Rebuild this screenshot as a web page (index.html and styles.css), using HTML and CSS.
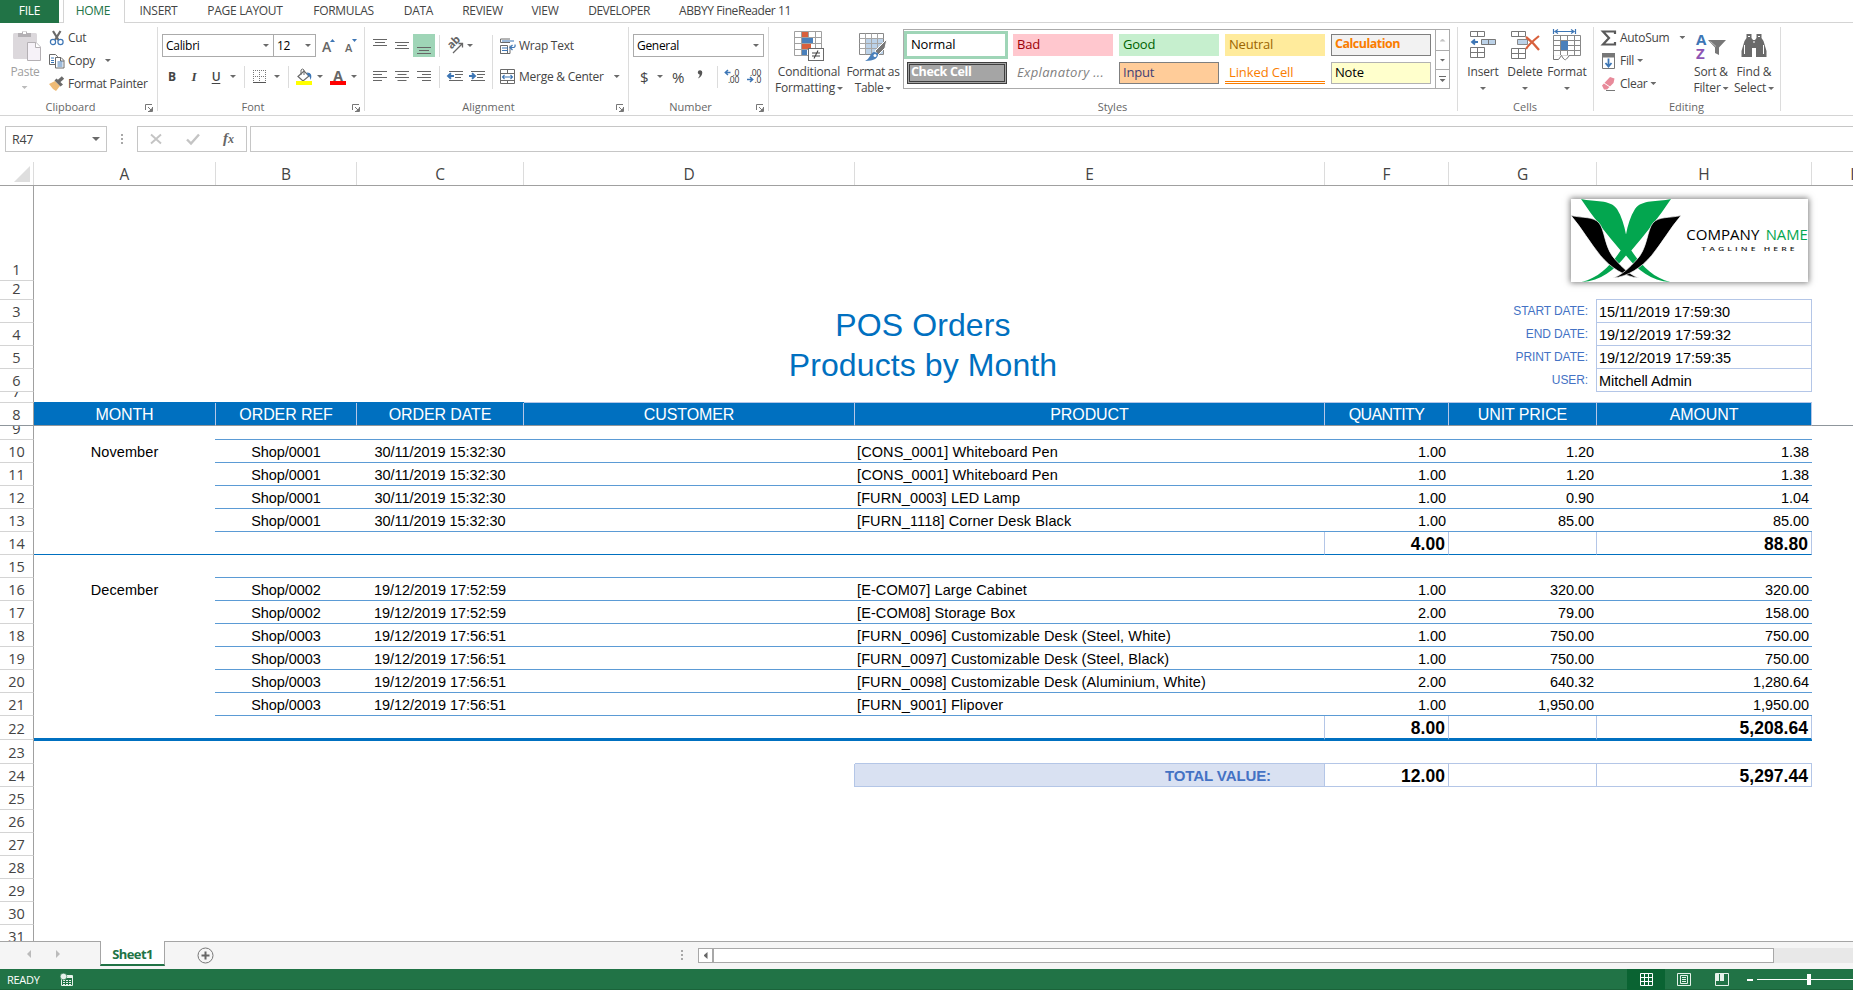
FILE: index.html
```html
<!DOCTYPE html>
<html lang="en">
<head>
<meta charset="utf-8">
<title>POS Orders</title>
<link rel="stylesheet" href="styles.css">
</head>
<body>
<div class="app">

<nav class="tabs">
  <div class="tab file">FILE</div>
  <div class="tab home">HOME</div>
  <div class="tab t-insert">INSERT</div>
  <div class="tab t-layout">PAGE LAYOUT</div>
  <div class="tab t-formulas">FORMULAS</div>
  <div class="tab t-data">DATA</div>
  <div class="tab t-review">REVIEW</div>
  <div class="tab t-view">VIEW</div>
  <div class="tab t-dev">DEVELOPER</div>
  <div class="tab t-abbyy">ABBYY FineReader 11</div>
</nav>

<section class="ribbon">
  <div class="group g-clip">
    <div class="body clip-body">
      <div class="paste">
        <svg width="30" height="32" viewBox="0 0 30 32"><rect x="1" y="3" width="24" height="26" rx="1.5" fill="#dcd8dc"/><path d="M6 3h4V1.500h5V3h4v4H6z" fill="#b4b0b4"/><rect x="11" y="2" width="3" height="2" fill="#fff"/><path d="M15.500 12.500h8.500l4.500 4.500v13.500h-13z" fill="#f6f2f8" stroke="#b4b0b4"/><path d="M23.500 12.500v5h5" fill="#fff" stroke="#b4b0b4"/></svg>
        <span>Paste</span><b class="dd pale"></b>
      </div>
      <div class="clip-list">
        <div class="line"><svg width="16" height="16" viewBox="0 0 16 16"><path d="M4 1l5.500 9M11.500 1L6 10" stroke="#6a6a6a" stroke-width="2.200"/><circle cx="4" cy="12" r="2.600" fill="none" stroke="#3d76b5" stroke-width="1.200"/><circle cx="11.500" cy="12" r="2.600" fill="none" stroke="#3d76b5" stroke-width="1.200"/></svg><span>Cut</span></div>
        <div class="line"><svg width="16" height="16" viewBox="0 0 16 16"><path d="M.5 1.500h6l2 2v8h-8z" fill="#fff" stroke="#6a6a6a"/><path d="M2 5h3M2 7.500h3M2 9.500h3" stroke="#3d76b5"/><path d="M6.500 4.500h5.500l3 3v7.500H6.500z" fill="#fff" stroke="#6a6a6a"/><path d="M11.500 4.500v3.500h3.500" fill="none" stroke="#6a6a6a"/><path d="M8.500 9h5M8.500 11h5M8.500 13h5" stroke="#3d76b5"/></svg><span>Copy</span><b class="dd copy-dd"></b></div>
        <div class="line"><svg width="16" height="16" viewBox="0 0 16 16"><path d="M0 8l6-3 5 5-4 5-3-2z" fill="#eebb77"/><path d="M5.500 4.500l2-2 6.500 6-2.500 2z" fill="#6a6a6a"/><path d="M9.500 5.500L14 1.500" stroke="#6a6a6a" stroke-width="3.500"/></svg><span>Format Painter</span></div>
      </div>
    </div>
    <div class="label">Clipboard<svg class="launch" width="8" height="8" viewBox="0 0 8 8"><path d="M.5 6V.5H7" fill="none" stroke="#777"/><path d="M3 3l3 3M7.500 3v4.500H3" stroke="#777" fill="none"/><path d="M7 4v3H4z" fill="#777"/></svg></div>
  </div>

  <div class="group g-font">
    <div class="body rows">
      <div class="bar top">
        <div class="combo c-name">Calibri<b class="dd"></b></div><div class="combo c-size">12<b class="dd"></b></div>
        <svg class="grow" width="14" height="16" viewBox="0 0 14 16"><text x="0" y="14" class="ga">A</text><path d="M8 4l2.500-3L13 4z" fill="#3d76b5"/></svg>
        <svg class="shrink" width="14" height="16" viewBox="0 0 14 16"><text x="1" y="14" class="gb">A</text><path d="M8 1h5l-2.500 3z" fill="#3d76b5"/></svg>
      </div>
      <div class="bar low">
        <span class="btn bold">B</span><span class="btn ital">I</span><span class="btn und">U</span><b class="dd f1"></b><i class="vs f2"></i>
        <svg class="f3" width="13" height="13" viewBox="0 0 13 13"><path d="M.5 0v12M6.500 0v12M12.500 0v12M0 .5h13M0 6.500h13" stroke="#777" stroke-dasharray="1 1"/><path d="M0 12.500h13" stroke="#555"/></svg><b class="dd f4"></b><i class="vs f5"></i>
        <svg class="f6" width="16" height="17" viewBox="0 0 16 17"><path d="M2 8.500l6-5.500 5 5-6 5z" fill="#fff" stroke="#6a6a6a" stroke-width="1.200"/><path d="M5 7V2q1.500-2 3 0v5" fill="none" stroke="#6a6a6a"/><path d="M11 4.500c4 0 5.500 3 3.500 7.500-.5-3-1-4-3-5z" fill="#3d76b5"/><path d="M0 13h16v4H0z" fill="#ff0"/></svg><b class="dd f7"></b>
        <svg class="f8" width="16" height="17" viewBox="0 0 16 17"><text x="8" y="12.500" text-anchor="middle" class="fa">A</text><path d="M0 13h16v4H0z" fill="#f00"/></svg><b class="dd f9"></b>
      </div>
    </div>
    <div class="label">Font<svg class="launch" width="8" height="8" viewBox="0 0 8 8"><path d="M.5 6V.5H7" fill="none" stroke="#777"/><path d="M3 3l3 3M7.500 3v4.500H3" stroke="#777" fill="none"/><path d="M7 4v3H4z" fill="#777"/></svg></div>
  </div>

  <div class="group g-align">
    <div class="body rows">
      <div class="bar top">
        <span class="btn first"><svg width="14" height="14" viewBox="0 0 14 14"><path d="M0 .5h14M2 3.500h10M0 6.500h14" stroke="#666"/></svg></span>
        <span class="btn"><svg width="14" height="14" viewBox="0 0 14 14"><path d="M0 3.500h14M2 6.500h10M0 9.500h14" stroke="#666"/></svg></span>
        <span class="btn on"><svg width="14" height="14" viewBox="0 0 14 14"><path d="M0 8.500h14M2 11.500h10M0 14.500h14" stroke="#666"/></svg></span>
        <i class="vs a1"></i>
        <svg class="a2" width="18" height="16" viewBox="0 0 18 16"><text transform="translate(4.500 11.500) rotate(-45)" class="abt">ab</text><path d="M6 15L15 6M11.500 5.500h4v4" fill="none" stroke="#666" stroke-width="1.300"/></svg><b class="dd a3"></b><i class="vs a4"></i>
        <svg class="a5" width="16" height="16" viewBox="0 0 16 16"><path d="M.5 1h9.500M.5 1v3.500h9.500M.5 7.500h7v8h-7zM10 7.500v8H.5" fill="none" stroke="#6a6a6a"/><path d="M2 3h12M2 10h6M2 12.500h6M10.500 9.500h3q2 0 1.500-3M12.500 7l-2.500 2.500 2.500 2.500" fill="none" stroke="#3d76b5" stroke-width="1.200"/></svg><span class="txt">Wrap Text</span>
      </div>
      <div class="bar low">
        <span class="btn first"><svg width="14" height="12" viewBox="0 0 14 12"><path d="M0 .5h14M0 3.500h9M0 6.500h14M0 9.500h9" stroke="#666"/></svg></span>
        <span class="btn"><svg width="14" height="12" viewBox="0 0 14 12"><path d="M0 .5h14M2.500 3.500h9M0 6.500h14M2.500 9.500h9" stroke="#666"/></svg></span>
        <span class="btn"><svg width="14" height="12" viewBox="0 0 14 12"><path d="M0 .5h14M5 3.500h9M0 6.500h14M5 9.500h9" stroke="#666"/></svg></span>
        <i class="vs a1"></i>
        <svg class="a6" width="16" height="12" viewBox="0 0 16 12"><path d="M2 .5h14M8 3.500h8M8 6.500h6M2 9.500h14" stroke="#666"/><path d="M7 5H1.500M4 2.200L1 5l3 2.800" fill="none" stroke="#3d76b5" stroke-width="1.900"/></svg>
        <svg class="a7" width="16" height="12" viewBox="0 0 16 12"><path d="M2 .5h14M8 3.500h8M8 6.500h6M2 9.500h14" stroke="#666"/><path d="M0 5h5.500M3 2.200L6 5 3 7.800" fill="none" stroke="#3d76b5" stroke-width="1.900"/></svg>
        <i class="vs a8"></i>
        <svg class="a9" width="16" height="16" viewBox="0 0 16 16"><path d="M.5.500h14v14H.5zM.5 4.500h14M.5 11.500h14M7.500.500v4M7.500 11.500v3" fill="none" stroke="#6a6a6a"/><path d="M2 8h11M4.500 6L2.500 8l2 2M10.500 6l2 2-2 2" fill="none" stroke="#3d76b5" stroke-width="1.100"/></svg><span class="txt">Merge &amp; Center</span><b class="dd a10"></b>
      </div>
    </div>
    <div class="label">Alignment<svg class="launch" width="8" height="8" viewBox="0 0 8 8"><path d="M.5 6V.5H7" fill="none" stroke="#777"/><path d="M3 3l3 3M7.500 3v4.500H3" stroke="#777" fill="none"/><path d="M7 4v3H4z" fill="#777"/></svg></div>
  </div>

  <div class="group g-num">
    <div class="body rows">
      <div class="bar top"><div class="combo c-gen">General<b class="dd"></b></div></div>
      <div class="bar low">
        <span class="dollar">$</span><b class="dd n1"></b><span class="pct">%</span><svg class="comma" width="6" height="9" viewBox="0 0 6 9"><path d="M.8 2.300a2.200 2.200 0 1 1 4.500.4C5 5.500 3.500 7 1 8.500c1-1.500 1.700-2.500 1.700-3.900C1.500 4.500.8 3.500.8 2.300z" fill="#555"/></svg><i class="vs n2"></i>
        <svg class="n3" width="16" height="15" viewBox="0 0 16 15"><text x="15" y="6.500" text-anchor="end" class="dec">.0</text><text x="15" y="14" text-anchor="end" class="dec">.00</text><path d="M6.500 3.500H1.500M4 1L1.300 3.500 4 6" fill="none" stroke="#3d76b5" stroke-width="1.500"/></svg>
        <svg class="n4" width="16" height="15" viewBox="0 0 16 15"><text x="15" y="6.500" text-anchor="end" class="dec">.00</text><text x="15" y="14" text-anchor="end" class="dec">.0</text><path d="M1 10.500h5M4 8l2.700 2.500L4 13" fill="none" stroke="#3d76b5" stroke-width="1.500"/></svg>
      </div>
    </div>
    <div class="label">Number<svg class="launch" width="8" height="8" viewBox="0 0 8 8"><path d="M.5 6V.5H7" fill="none" stroke="#777"/><path d="M3 3l3 3M7.500 3v4.500H3" stroke="#777" fill="none"/><path d="M7 4v3H4z" fill="#777"/></svg></div>
  </div>

  <div class="group g-styles">
    <div class="body">
      <div class="big b-cond">
        <svg width="30" height="30" viewBox="0 0 30 30"><path d="M.5.500h27v24H.5zM.5 6.500h27M.5 12.500h27M.5 18.500h27M7.500.500v24M14.500.500v24M21.500.500v24" fill="#fff" stroke="#a0a0a0"/><path d="M8 1h6v5H8zM8 13h9v5H8z" fill="#d8603c"/><path d="M8 7h11v5H8zM8 19h5v5H8z" fill="#4a80bb"/><rect x="14.500" y="17.500" width="15" height="12" fill="#fff" stroke="#6a6a6a"/><path d="M18 22h8M18 25h8M24 19.500l-4 8" stroke="#444" stroke-width="1.100"/></svg>
        <span>Conditional</span><span>Formatting <b class="dd"></b></span>
      </div>
      <div class="big b-table">
        <svg width="30" height="30" viewBox="0 0 30 30"><path d="M1.500 2.500h24v21h-24z" fill="#fff" stroke="#888"/><path d="M8 8h17v15H8z" fill="#bcd2e8"/><path d="M1.500 7.500h24M1.500 12.500h24M1.500 17.500h24M7.500 2.500v21M13.500 2.500v21M19.500 2.500v21" stroke="#a6a6a6"/><path d="M29 8l-2 9-7 7-3-4z" fill="#777" stroke="#fff"/><path d="M20 22c1 5-4 8-13 8 5-2 5-8 9-9z" fill="#4a80bb"/><circle cx="17" cy="24.500" r="1.500" fill="#fff"/></svg>
        <span>Format as</span><span>Table <b class="dd"></b></span>
      </div>
      <div class="gallery">
        <div class="chips">
          <div class="chip s-normal">Normal</div><div class="chip s-bad">Bad</div><div class="chip s-good">Good</div><div class="chip s-neutral">Neutral</div><div class="chip s-calc">Calculation</div>
          <div class="chip s-check">Check Cell</div><div class="chip s-exp">Explanatory ...</div><div class="chip s-input">Input</div><div class="chip s-link">Linked Cell</div><div class="chip s-note">Note</div>
        </div>
        <div class="scroller"><div class="sc"><b class="up"></b></div><div class="sc mid"><b class="dd"></b></div><div class="sc end"><u></u><b class="dd"></b></div></div>
      </div>
    </div>
    <div class="label">Styles</div>
  </div>

  <div class="group g-cells">
    <div class="body">
      <div class="big b-ins">
        <svg width="28" height="30" viewBox="0 0 28 30"><path d="M1.500 1.500h14v5h-14zM8.500 1.500v5M1.500 17.500h14v10h-14zM8.500 17.500v10M1.500 22.500h14" fill="#fff" stroke="#777"/><path d="M12.500 9.500h14v5h-14zM19.500 9.500v5" fill="#bcd2e8" stroke="#777"/><path d="M9 12H3.500M6 9.500L3 12l3 2.500" fill="none" stroke="#3d76b5" stroke-width="1.800"/></svg>
        <span>Insert</span><b class="dd"></b>
      </div>
      <div class="big b-del">
        <svg width="30" height="30" viewBox="0 0 30 30"><path d="M1.500 1.500h14v5h-14zM8.500 1.500v5M1.500 18.500h14v10h-14zM8.500 18.500v10M1.500 23.500h14" fill="#fff" stroke="#777"/><path d="M7.500 9.500h10v5h-10z" fill="#bcd2e8" stroke="#888"/><path d="M16 7c4 3 9 8 13 13M29 6c-5 4-10 8-13 13" fill="none" stroke="#d8603c" stroke-width="2.200"/></svg>
        <span>Delete</span><b class="dd"></b>
      </div>
      <div class="big b-fmt">
        <svg width="30" height="32" viewBox="0 0 30 32"><path d="M1.500 0v5M23.500 0v5M3 2.500h19M6 .5l-3 2 3 2M19 .5l3 2-3 2" fill="none" stroke="#3d76b5" stroke-width="1.200"/><path d="M1.500 6.500h27v20h-27zM1.500 11.500h27M1.500 21.500h27M8.500 6.500v20M15.500 6.500v20M22.500 6.500v20M1.500 16.500h27" fill="#fff" stroke="#888"/><path d="M9 12h7v9H9z" fill="#4a80bb"/><path d="M1.500 26v4.500h5l3-4q3 6 5 3.500l3-3.500" fill="#fff" stroke="#777"/></svg>
        <span>Format</span><b class="dd"></b>
      </div>
    </div>
    <div class="label">Cells</div>
  </div>

  <div class="group g-edit">
    <div class="body">
      <div class="edit-list">
        <div class="line"><svg width="16" height="16" viewBox="0 0 16 16"><path d="M14 4V1.500H2L8 8l-6 6.500h12V12" fill="none" stroke="#5a5a5a" stroke-width="2.200"/></svg><span>AutoSum</span><b class="dd as-dd"></b></div>
        <div class="line"><svg width="16" height="16" viewBox="0 0 16 16"><path d="M1.500.500h12v15h-12z" fill="#fff" stroke="#777"/><path d="M1 0h13v4.500H1z" fill="#777"/><path d="M7.500 5.500v8M4.500 10l3 3.500 3-3.500" fill="none" stroke="#3d76b5" stroke-width="1.800"/></svg><span>Fill</span><b class="dd"></b></div>
        <div class="line"><svg width="16" height="16" viewBox="0 0 16 16"><path d="M1 9.500L9 1l4.500 1.500L12.500 7 6 13.500H3z" fill="#e88a9a"/><path d="M3 7l6 4" stroke="#fff"/><path d="M5 14.500h9" stroke="#777"/></svg><span>Clear</span><b class="dd"></b></div>
      </div>
      <div class="big b-sort">
        <svg width="30" height="28" viewBox="0 0 30 28"><text x="0" y="12.500" class="az" fill="#3d76b5">A</text><text x="0" y="27" class="az" fill="#8e55b4">Z</text><path d="M12 8h18l-7 7.500V23l-4-2v-5.500z" fill="#777"/><path d="M14.500 9.500l5.500 5" stroke="#bbb"/></svg>
        <span>Sort &amp;</span><span>Filter <b class="dd"></b></span>
      </div>
      <div class="big b-find">
        <svg width="28" height="26" viewBox="0 0 28 26"><path d="M6.500 1h5v4l1.500 2h2L16.500 5V1h5v4l2 3 3 10v6H16v-9h-4v9H1.500v-6l3-10 2-3z" fill="#6a6a6a"/><path d="M4.500 12v9M23.500 12v9M8 3.500h2M18 3.500h2M13 9h2" stroke="#fff"/></svg>
        <span>Find &amp;</span><span>Select <b class="dd"></b></span>
      </div>
    </div>
    <div class="label">Editing</div>
  </div>
</section>

<section class="fbar">
  <div class="namebox">R47<b class="dd big-dd"></b></div>
  <div class="dots"><i></i><i></i><i></i></div>
  <div class="fx">
    <svg width="12" height="12" viewBox="0 0 12 12"><path d="M1 1.500l10 9M11 1.500l-10 9" stroke="#c4c4c4" stroke-width="1.900"/></svg>
    <svg width="14" height="12" viewBox="0 0 14 12"><path d="M1 6.500l4 4L13 1.500" fill="none" stroke="#c4c4c4" stroke-width="2.400"/></svg>
    <span class="fxt">f<small>x</small></span>
  </div>
  <div class="finput"></div>
</section>

<main class="sheet">
  <div class="row cols">
    <div class="corner"><svg width="16" height="16" viewBox="0 0 16 16"><path d="M16 0v16H0z" fill="#dedede"/></svg></div>
    <div>A</div><div>B</div><div>C</div><div>D</div><div>E</div><div>F</div><div>G</div><div>H</div><div>I</div>
  </div>
  <div class="row r1"><div class="rh">1</div></div>
  <div class="row r2"><div class="rh">2</div></div>
  <div class="headrows">
    <div class="nums"><div class="rh">3</div><div class="rh">4</div><div class="rh">5</div><div class="rh">6</div></div>
    <div class="title"><div>POS Orders</div><div>Products by Month</div></div>
    <div class="labs"><div>START DATE:</div><div>END DATE:</div><div>PRINT DATE:</div><div>USER:</div></div>
    <div class="vals"><div>15/11/2019 17:59:30</div><div>19/12/2019 17:59:32</div><div>19/12/2019 17:59:35</div><div>Mitchell Admin</div></div>
  </div>
  <div class="row r7"><div class="rh">7</div><i></i><i></i><i></i><i></i><i></i><i></i><i></i><i></i></div>
  <div class="row th"><div class="rh">8</div><div>MONTH</div><div>ORDER REF</div><div>ORDER DATE</div><div>CUSTOMER</div><div>PRODUCT</div><div class="tight">QUANTITY</div><div>UNIT PRICE</div><div>AMOUNT</div><div class="rest"></div></div>
  <div class="row r9 lined"><div class="rh">9</div><i></i><i></i><i></i><i></i><i></i><i></i><i></i><i></i></div>
  <div class="row lined"><div class="rh">10</div><div>November</div><div>Shop/0001</div><div>30/11/2019 15:32:30</div><div></div><div>[CONS_0001] Whiteboard Pen</div><div>1.00</div><div>1.20</div><div>1.38</div></div>
  <div class="row lined"><div class="rh">11</div><div></div><div>Shop/0001</div><div>30/11/2019 15:32:30</div><div></div><div>[CONS_0001] Whiteboard Pen</div><div>1.00</div><div>1.20</div><div>1.38</div></div>
  <div class="row lined"><div class="rh">12</div><div></div><div>Shop/0001</div><div>30/11/2019 15:32:30</div><div></div><div>[FURN_0003] LED Lamp</div><div>1.00</div><div>0.90</div><div>1.04</div></div>
  <div class="row lined"><div class="rh">13</div><div></div><div>Shop/0001</div><div>30/11/2019 15:32:30</div><div></div><div>[FURN_1118] Corner Desk Black</div><div>1.00</div><div>85.00</div><div>85.00</div></div>
  <div class="row sum"><div class="rh">14</div><div></div><div></div><div></div><div></div><div></div><div>4.00</div><div></div><div>88.80</div></div>
  <div class="row lined"><div class="rh">15</div><i></i><i></i><i></i><i></i><i></i><i></i><i></i><i></i></div>
  <div class="row lined"><div class="rh">16</div><div>December</div><div>Shop/0002</div><div>19/12/2019 17:52:59</div><div></div><div>[E-COM07] Large Cabinet</div><div>1.00</div><div>320.00</div><div>320.00</div></div>
  <div class="row lined"><div class="rh">17</div><div></div><div>Shop/0002</div><div>19/12/2019 17:52:59</div><div></div><div>[E-COM08] Storage Box</div><div>2.00</div><div>79.00</div><div>158.00</div></div>
  <div class="row lined"><div class="rh">18</div><div></div><div>Shop/0003</div><div>19/12/2019 17:56:51</div><div></div><div>[FURN_0096] Customizable Desk (Steel, White)</div><div>1.00</div><div>750.00</div><div>750.00</div></div>
  <div class="row lined"><div class="rh">19</div><div></div><div>Shop/0003</div><div>19/12/2019 17:56:51</div><div></div><div>[FURN_0097] Customizable Desk (Steel, Black)</div><div>1.00</div><div>750.00</div><div>750.00</div></div>
  <div class="row lined"><div class="rh">20</div><div></div><div>Shop/0003</div><div>19/12/2019 17:56:51</div><div></div><div>[FURN_0098] Customizable Desk (Aluminium, White)</div><div>2.00</div><div>640.32</div><div>1,280.64</div></div>
  <div class="row lined"><div class="rh">21</div><div></div><div>Shop/0003</div><div>19/12/2019 17:56:51</div><div></div><div>[FURN_9001] Flipover</div><div>1.00</div><div>1,950.00</div><div>1,950.00</div></div>
  <div class="row sum tall thick"><div class="rh">22</div><div></div><div></div><div></div><div></div><div></div><div>8.00</div><div></div><div>5,208.64</div></div>
  <div class="row tall r23"><div class="rh">23</div><i></i><i></i><i></i><i></i><i></i><i></i><i></i><i></i></div>
  <div class="row total"><div class="rh">24</div><div></div><div></div><div></div><div></div><div>TOTAL VALUE:</div><div>12.00</div><div></div><div>5,297.44</div></div>
  <div class="row"><div class="rh">25</div></div>
  <div class="row"><div class="rh">26</div></div>
  <div class="row"><div class="rh">27</div></div>
  <div class="row"><div class="rh">28</div></div>
  <div class="row"><div class="rh">29</div></div>
  <div class="row"><div class="rh">30</div></div>
  <div class="row"><div class="rh">31</div></div>

  <svg class="logo" width="237" height="83" viewBox="0 0 711 250" preserveAspectRatio="none">
    <path fill="#03a64f" d="M30 0C72 10 116 0 138 30C152 52 160 80 165 107C170 80 178 52 192 30C214 0 258 10 300 0C264 56 222 106 181 155C212 202 246 236 298 250C240 246 200 214 165 170C130 214 90 246 32 250C84 236 118 202 149 155C108 106 66 56 30 0Z"/>
    <path stroke="#fff" stroke-width="2" d="M0 50C38 58 66 52 84 72C102 92 100 150 134 184C154 206 176 228 203 238C160 234 118 206 88 170C54 128 34 90 0 50Z"/>
    <path stroke="#fff" stroke-width="2" d="M330 50C292 58 264 52 246 72C228 92 230 150 196 184C176 206 154 228 127 238C170 234 212 206 242 170C276 128 296 90 330 50Z"/>
    <text x="346" y="125" class="co" textLength="219" lengthAdjust="spacingAndGlyphs">COMPANY</text>
    <text x="584" y="125" class="co gr" textLength="126" lengthAdjust="spacingAndGlyphs">NAME</text>
    <text transform="translate(391 157) scale(2 1)" class="tag" textLength="143">TAGLINE HERE</text>
  </svg>
</main>

<footer class="sheetbar">
  <b class="tri-l"></b><b class="tri-r"></b>
  <div class="stab">Sheet1</div>
  <svg class="plus" width="17" height="17" viewBox="0 0 17 17"><circle cx="8.500" cy="8.500" r="7.500" fill="none" stroke="#777"/><path d="M8.500 4.500v8M4.500 8.500h8" stroke="#666" stroke-width="2"/></svg>
  <div class="dots sdots"><i></i><i></i><i></i></div>
  <div class="hscroll"><div class="hbtn"><b></b></div><div class="thumb"></div></div>
</footer>
<div class="status">
  <span>READY</span>
  <svg class="macro" width="14" height="14" viewBox="0 0 14 14"><path d="M1.500 2.500h11v10h-11z" fill="#217346" stroke="#e6f2ea"/><path d="M2 3h11v2H2z" fill="#e6f2ea"/><path d="M3 7.500h2M6 7.500h2M9 7.500h2M3 9.500h2M6 9.500h2M9 9.500h2M3 11.500h2M6 11.500h2M9 11.500h2" stroke="#e6f2ea"/><circle cx="3.500" cy="3.500" r="3.300" fill="#e6f2ea" stroke="#217346" stroke-width=".6"/></svg>
  <div class="view on"><svg width="13" height="13" viewBox="0 0 13 13"><path d="M.5.500h12v12H.5zM4.500 0v13M8.500 0v13M0 4.500h13M0 8.500h13" fill="none" stroke="#fff"/></svg></div>
  <div class="view"><svg width="14" height="13" viewBox="0 0 14 13"><path d="M.5.500h13v12H.5zM3.500 2.500h7v8h-7zM5 4.500h4M5 6.500h4M5 8.500h4" fill="none" stroke="#e6f2ea"/></svg></div>
  <div class="view"><svg width="14" height="13" viewBox="0 0 14 13"><path d="M.5.500h13v12H.5z" fill="none" stroke="#e6f2ea"/><path d="M1 1h3v7H1zM5 1h4v7H5z" fill="#e6f2ea"/></svg></div>
  <div class="minus"></div>
  <div class="slider"><i></i></div>
</div>

</div>
</body>
</html>
```
FILE: styles.css
```css
* { box-sizing: border-box; }
body { margin: 0; background: #fff; font-family: "Open Sans", "Noto Sans", sans-serif; font-size: 12px; color: #444; letter-spacing: -0.3px; }
i { font-style: normal; }
svg { display: block; flex: none; overflow: visible; }
.app { width: 1853px; height: 990px; overflow: hidden; display: flex; flex-direction: column; }

/* drop-down arrow */
.dd { display: inline-block; flex: none; width: 6px; height: 3px; background: #6a6a6a; clip-path: polygon(0 0, 100% 0, 50% 100%); }
.dd.pale { background: #bbb; }

/* tabs */
.tabs { display: flex; height: 23px; flex: none; border-bottom: 1px solid #d4d4d4; }
.tab { height: 23px; line-height: 22px; text-align: center; white-space: nowrap; }
.file { width: 59px; background: #217346; color: #fff; }
.home { width: 62px; margin-left: 4px; padding-right: 2px; background: #fff; border: solid #d4d4d4; border-width: 0 1px; color: #217346; }
.t-insert { width: 67px; }
.t-layout { width: 106px; }
.t-formulas { width: 91px; }
.t-data { width: 59px; }
.t-review { width: 69px; }
.t-view { width: 56px; }
.t-dev { width: 92px; letter-spacing: -0.5px; }
.t-abbyy { width: 140px; letter-spacing: -0.4px; }

/* ribbon */
.ribbon { display: flex; height: 93px; flex: none; padding-top: 4px; border-bottom: 1px solid #d4d4d4; }
.group { height: 84px; border-right: 1px solid #dcdcdc; flex: none; }
.g-clip { width: 158px; }
.g-font { width: 207px; }
.g-align { width: 264px; }
.g-num { width: 140px; }
.g-styles { width: 689px; }
.g-cells { width: 136px; }
.g-edit { width: 187px; }
.body { height: 72px; display: flex; align-items: flex-start; }
.rows { flex-direction: column; }
.label { height: 16px; line-height: 16px; font-size: 11px; letter-spacing: 0; color: #666; display: flex; justify-content: center; align-items: center; position: relative; padding-right: 16px; }
.launch { position: absolute; right: 4px; top: 5px; }
.g-styles .label, .g-cells .label, .g-edit .label { padding-right: 1px; }

.paste { width: 49px; padding-top: 3px; display: flex; flex-direction: column; align-items: center; color: #a0a0a0; }
.paste svg { margin-left: 4px; }
.paste span { line-height: 16px; margin-top: 2px; margin-left: 1px; }
.paste .dd { margin-top: 6px; }
.clip-list, .edit-list { margin-top: -1px; }
.line { display: flex; height: 23px; align-items: center; white-space: nowrap; }
.line svg { margin-right: 3px; }
.copy-dd { margin-left: 10px; }

.bar { display: flex; height: 23px; align-items: center; flex: none; white-space: nowrap; }
.top { margin-top: 7px; }
.low { margin-top: 8px; }
.combo { height: 23px; border: 1px solid #ababab; color: #000; display: flex; align-items: center; justify-content: space-between; padding: 0 4px 0 3px; }
.c-name { width: 112px; margin-left: 4px; }
.c-size { width: 43px; margin-left: -1px; }
.c-gen { width: 131px; margin-left: 4px; }
.grow { margin-left: 6px; }
.shrink { margin-left: 8px; }
.ga { font: 600 14px "Open Sans", sans-serif; fill: #666; }
.gb { font: 600 11px "Open Sans", sans-serif; fill: #666; }
.fa { font: 700 14px "Open Sans", sans-serif; fill: #666; }
.btn { width: 22px; height: 23px; display: flex; align-items: center; justify-content: center; }
.btn.first { margin-left: 4px; }
.btn.on { background: #9fd5b7; }
.bold { font-weight: 700; margin-left: 3px; }
.ital { font: italic 700 13px "Liberation Serif", serif; }
.und { font-weight: 600; text-decoration: underline; text-underline-offset: 2px; }
.vs { width: 1px; height: 22px; background: #dcdcdc; flex: none; }
.f1 { margin-left: 3px; }
.f2 { margin-left: 8px; }
.f3 { margin-left: 8px; }
.f4 { margin-left: 8px; }
.f5 { margin-left: 8px; }
.f6 { margin-left: 7px; }
.f7 { margin-left: 5px; }
.f8 { margin-left: 7px; }
.f9 { margin-left: 5px; }

.a1 { margin-left: 4px; }
.a2 { margin-left: 7px; }
.a3 { margin-left: 2px; }
.a4 { margin-left: 19px; height: 30px; margin-bottom: -8px; }
.a5 { margin-left: 7px; margin-right: 3px; }
.a6 { margin-left: 7px; }
.a7 { margin-left: 6px; }
.a8 { margin-left: 7px; height: 24px; }
.a9 { margin-left: 7px; margin-right: 3px; }
.a10 { margin-left: 10px; }
.txt { letter-spacing: -0.25px; }
.abt { font: 700 11px "Open Sans", sans-serif; fill: #666; }

.dollar { font-size: 15px; margin-left: 11px; width: 9px; }
.n1 { margin-left: 8px; }
.pct { font-size: 15px; margin-left: 9px; width: 14px; letter-spacing: 0; }
.comma { margin: -4px 2px 0 11px; }
.n2 { margin-left: 12px; }
.n3 { margin-left: 6px; }
.n4 { margin-left: 6px; }
.dec { font: 8.500px "Open Sans", sans-serif; fill: #333; }

.big { display: flex; flex-direction: column; align-items: center; flex: none; white-space: nowrap; line-height: 16px; letter-spacing: -0.15px; }
.big span { display: block; }
.big span .dd { vertical-align: 2px; margin-left: -1px; }
.big > .dd { margin-top: 7px; }
.big svg { margin-bottom: 3px; }
.b-cond { width: 68px; margin: 4px 0 0 6px; }
.b-table { width: 56px; margin: 4px 0 0 2px; letter-spacing: -0.3px; }
.b-ins { width: 40px; margin: 3px 0 0 5px; }
.b-ins svg, .b-del svg { margin-bottom: 4px; }
.b-del { width: 40px; margin: 3px 0 0 2px; }
.b-fmt { width: 46px; margin: 2px 0 0 -1px; }
.b-sort { width: 40px; margin: 5px 0 0 0; }
.b-sort svg { margin-bottom: 4px; }
.b-find { width: 42px; margin: 6px 0 0 2px; }
.b-find svg { margin-bottom: 5px; }
.az { font: 700 15px "Open Sans", sans-serif; }
.edit-list { width: 97px; padding-left: 7px; }
.as-dd { margin-left: 10px; }
.edit-list .line .dd:not(.as-dd) { margin-left: 3px; }

.gallery { display: flex; width: 547px; height: 60px; border: 1px solid #ababab; margin: 2px 0 0 2px; }
.chips { width: 531px; padding: 4px 0 0 3px; display: grid; grid-template-columns: repeat(5, 106px); grid-template-rows: 28px 28px; }
.chip { width: 100px; height: 22px; line-height: 20px; padding-left: 4px; font-size: 13px; letter-spacing: -0.2px; white-space: nowrap; }
.s-normal { width: 104px; height: 28px; margin: -3px; padding-left: 4px; border: 3px solid #9fd5b7; color: #000; }
.s-bad { background: #ffc7ce; color: #9c0006; }
.s-good { background: #c6efce; color: #006100; }
.s-neutral { background: #ffeb9c; color: #9c6500; }
.s-calc { background: #f2f2f2; color: #fa7d00; border: 1px solid #7f7f7f; font-weight: 700; line-height: 18px; padding-left: 3px; letter-spacing: -0.5px; font-size: 12.500px; }
.s-check { background: #a5a5a5; color: #fff; border: 3px double #3f3f3f; font-weight: 700; line-height: 14px; padding-left: 1px; letter-spacing: -0.35px; font-size: 12.500px; }
.s-exp { color: #7f7f7f; font-style: italic; letter-spacing: 0.35px; }
.s-input { background: #ffcc99; color: #3f3f76; border: 1px solid #7f7f7f; line-height: 18px; padding-left: 3px; }
.s-link { color: #fa7d00; border-bottom: 3px double #fa7d00; letter-spacing: -0.1px; }
.s-note { background: #ffffcc; color: #000; border: 1px solid #b2b2b2; line-height: 18px; padding-left: 3px; }
.scroller { width: 14px; border-left: 1px solid #ababab; }
.sc { height: 20px; display: flex; flex-direction: column; align-items: center; justify-content: center; }
.mid { border: solid #ababab; border-width: 1px 0; }
.end { height: 18px; }
.end u { width: 7px; height: 1px; background: #6a6a6a; margin-bottom: 2px; }
.up { width: 6px; height: 3px; background: #c4c4c4; clip-path: polygon(50% 0, 100% 100%, 0 100%); }

/* formula bar */
.fbar { display: flex; height: 46px; flex: none; padding: 10px 0 0 5px; }
.namebox { width: 102px; height: 26px; border: 1px solid #c6c6c6; display: flex; align-items: center; justify-content: space-between; padding: 0 6px; font-size: 12.500px; }
.big-dd { width: 8px; height: 4px; }
.dots { display: flex; flex-direction: column; gap: 2px; margin: 8px 0 0 14px; width: 2px; }
.dots i { width: 2px; height: 2px; background: #a8a8a8; }
.fx { width: 110px; height: 26px; border: 1px solid #c6c6c6; margin-left: 14px; display: flex; align-items: center; padding-left: 12px; }
.fx svg + svg { margin-left: 24px; }
.fxt { font: italic 700 15px "Liberation Serif", serif; margin: -2px 0 0 23px; color: #666; letter-spacing: 0; }
.fxt small { font-size: 12px; }
.finput { flex: 1; height: 26px; border: 1px solid #c6c6c6; border-right: 0; margin-left: 3px; }

/* sheet */
.sheet { position: relative; height: 779px; flex: none; overflow: hidden; font: 14.500px "Liberation Sans", Arial, sans-serif; letter-spacing: -0.05px; color: #000; }
.row { display: grid; grid-template-columns: 34px 182px 141px 167px 331px 470px 124px 148px 215px 82px; grid-template-rows: 100%; height: 23px; line-height: 24px; white-space: nowrap; }
.row > div { text-align: center; min-height: 0; }
.row > :nth-child(2) { letter-spacing: 0.1px; padding-right: 1px; }
.row > :nth-child(4) { padding-right: 1px; }
.row > :nth-child(6) { text-align: left; padding-left: 2px; letter-spacing: 0.1px; }
.row > :nth-child(7), .row > :nth-child(8) { text-align: right; padding-right: 3px; }
.row > :nth-child(9) { text-align: right; padding-right: 3px; }
.row > .rh, .rh { display: flex; align-items: flex-end; justify-content: center; overflow: hidden; line-height: 21px; font-family: "Open Sans", sans-serif; font-size: 14.500px; letter-spacing: 0; color: #444; border-right: 1px solid #a0a0a0; border-bottom: 1px solid #d4d4d4; }
.cols { height: 24px; border-bottom: 1px solid #a0a0a0; }
.row.cols > div { text-align: center; padding: 0; border-right: 1px solid #dcdcdc; font: 15.500px/24px "Open Sans", sans-serif; color: #444; }
.row.cols > .corner { padding: 4px 0 0 14px; }
.r1 { height: 95px; }
.r2 { height: 19px; }
.headrows { display: grid; grid-template-columns: 34px 1400px 162px 216px; height: 92px; white-space: nowrap; }
.nums .rh { height: 23px; }
.labs { text-align: right; padding-right: 8px; font-size: 12px; letter-spacing: -0.1px; color: #4472c4; }
.labs div { height: 23px; line-height: 22px; }
.vals { border: 1px solid #b4c6e7; margin-top: -1px; }
.vals div { height: 23px; line-height: 24px; padding-left: 2px; border-bottom: 1px solid #b4c6e7; }
.vals div:last-child { border-bottom: 0; height: 22px; }
.title { padding: 5px 0 0 378px; text-align: center; font-size: 32px; line-height: 40px; color: #0070c0; letter-spacing: 0.1px; }
.r7 { height: 11px; }
.r7 > i { border-bottom: 1px solid #b4c6e7; }
.r7 > :nth-child(-n+4) { border-bottom-color: #0070c0; }
.r7 > .rh { border-bottom-color: #d4d4d4; }
.row.th > div { text-align: center; padding: 0; border-bottom: 1px solid #8f969c; }
.row.th > div:not(.rh):not(.rest) { background: #0070c0; color: #fff; border-right: 1px solid #b4c6e7; font-size: 16px; line-height: 24px; letter-spacing: -0.1px; }
.row.th > div.tight:not(.rh):not(.rest) { letter-spacing: -0.7px; }
.r9 { height: 14px; }
.lined > :nth-child(n+3) { border-bottom: 1px solid #5b9bd5; }
.lined > :nth-child(3) { margin-left: -1px; }
.sum > :nth-child(n+2) { border-bottom: 1px solid #0070c0; }
.sum > :nth-child(n+6), .total > :nth-child(n+6) { border-right: 1px solid #b4c6e7; font-weight: 700; font-size: 17.500px; letter-spacing: 0; }
.row.sum > :nth-child(n+7), .row.total > :nth-child(n+7) { padding-right: 3px; letter-spacing: 0.05px; }
.tall { height: 24px; }
.thick > :nth-child(n+2) { border-bottom: 2px solid #0070c0; }
.r23 > i { border-top: 1px solid #0070c0; }
.r23 > :nth-child(n+6) { border-bottom: 1px solid #b4c6e7; }
.total > :nth-child(n+6) { border-bottom: 1px solid #b4c6e7; }
.row.total > :nth-child(6) { background: #d9e1f2; border-left: 1px solid #b4c6e7; margin-left: -1px; text-align: right; padding-right: 53px; font-size: 15px; letter-spacing: -0.1px; color: #4472c4; }
.logo { position: absolute; left: 1571px; top: 37px; background: #fff; box-shadow: 0 0 6px 1px rgba(0,0,0,.5); overflow: hidden; }
.co { font: 46px "Open Sans", sans-serif; letter-spacing: 0; }
.gr { fill: #03a64f; }
.tag { font: 600 13px "Open Sans", sans-serif; fill: #222; letter-spacing: 3px; }

/* sheet tabs */
.sheetbar { display: flex; height: 28px; flex: none; background: #f5f5f5; border-top: 1px solid #a5a5a5; }
.tri-l, .tri-r { width: 4px; height: 8px; background: #bbb; margin-top: 8px; }
.tri-l { margin-left: 27px; clip-path: polygon(100% 0, 100% 100%, 0 50%); }
.tri-r { margin-left: 25px; clip-path: polygon(0 0, 100% 50%, 0 100%); }
.stab { width: 65px; height: 25px; margin: -1px 0 0 40px; background: #fff; border: solid #a5a5a5; border-width: 0 1px; border-bottom: 2px solid #217346; color: #217346; font-weight: 700; font-size: 13px; line-height: 26px; text-align: center; letter-spacing: -0.6px; }
.plus { margin: 5px 0 0 32px; }
.sdots { margin: 8px 0 0 467px; }
.hscroll { flex: 1; height: 15px; margin: 6px 0 0 15px; background: #e8e8e8; display: flex; }
.hbtn { width: 15px; border: 1px solid #a8a8a8; background: #fff; display: flex; align-items: center; justify-content: center; }
.hbtn b { width: 4px; height: 7px; background: #666; clip-path: polygon(100% 0, 100% 100%, 0 50%); }
.thumb { width: 1061px; border: 1px solid #a8a8a8; background: #fff; }

/* status bar */
.status { display: flex; height: 21px; flex: none; background: #217346; color: #fff; font-size: 11px; line-height: 22px; padding-left: 7px; border-bottom: 1px solid #1a6339; }
.status span { width: 53px; }
.macro { margin-top: 4px; }
.view { width: 38px; height: 21px; display: flex; justify-content: center; padding-top: 4px; }
.view.on { margin-left: 1553px; background: #0a6332; }
.minus { width: 6px; height: 2px; background: #fff; margin: 10px 4px 0 6px; }
.slider { flex: 1; height: 1px; background: #fff; margin-top: 10px; }
.slider i { display: block; width: 4px; height: 11px; background: #fff; margin: -5px 0 0 50px; }
```
